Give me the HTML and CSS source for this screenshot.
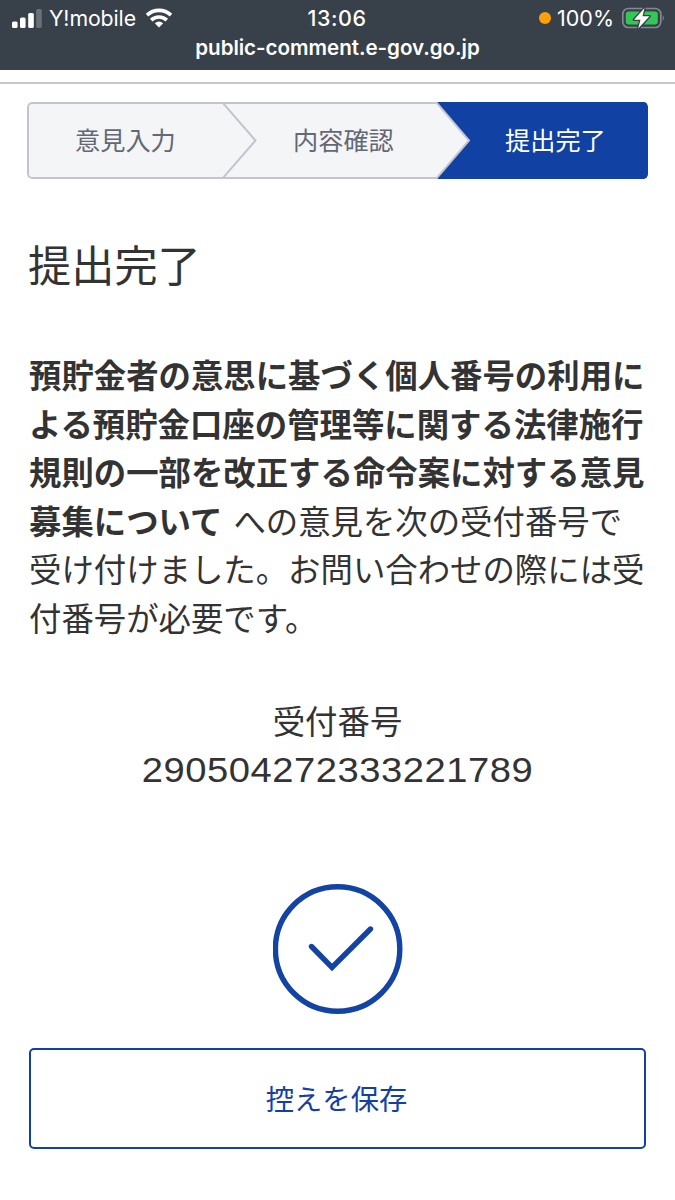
FILE: index.html
```html
<!DOCTYPE html>
<html lang="ja">
<head>
<meta charset="utf-8">
<title>提出完了</title>
<link rel="stylesheet" href="styles.css">
</head>
<body>
<header class="browser-bar">
  <div class="status">
    <div class="status-left">
      <svg class="signal" width="31" height="20" viewBox="0 0 31 20" fill="#fff">
        <rect x="0" y="12.5" width="5.6" height="6.5" rx="1.5"/>
        <rect x="8" y="8.5" width="5.6" height="10.5" rx="1.5"/>
        <rect x="16.2" y="4" width="5.6" height="15" rx="1.5"/>
        <rect x="24.2" y="0" width="5.6" height="19" rx="1.5" opacity=".25"/>
      </svg>
      <span class="carrier">Y!mobile</span>
      <svg class="wifi" width="28" height="20" viewBox="0 0 28 20" fill="none" stroke="#fff" stroke-width="3.6">
        <path d="M2 7.1A17.500 17.500 0 0 1 26 7.100"/>
        <path d="M6.200 12.100A11.200 11.200 0 0 1 21.800 12.100"/>
        <path d="M14 19.500L9.800 15.300Q14 11.600 18.200 15.300Z" fill="#fff" stroke="none"/>
      </svg>
    </div>
    <span class="time">13:06</span>
    <div class="status-right">
      <span class="dot"></span>
      <span class="percent">100%</span>
      <svg class="battery" width="44" height="24" viewBox="0 0 44 24">
        <rect x="1.800" y="1.500" width="38" height="19" rx="5.500" fill="none" stroke="#858a91" stroke-width="1.600"/>
        <rect x="4.800" y="4.500" width="32" height="13" rx="3" fill="#33c758"/>
        <path d="M41.700 8Q44 11 41.700 14Z" fill="#858a91"/>
        <path d="M23.500 1L13 12.700H19.500L17.200 21.500L28.500 9.300H21.500Z" fill="#fff" stroke="#38404a" stroke-width="2.600" paint-order="stroke" stroke-linejoin="round"/>
      </svg>
    </div>
  </div>
  <div class="address">public-comment.e-gov.go.jp</div>
</header>
<div class="page-head"></div>
<main class="content">
  <ol class="steps">
    <li class="step">意見入力
      <svg class="arrow" width="35" height="77" viewBox="0 0 35 77"><path d="M0 0L33.500 38.500L0 77" fill="#f4f5f7" stroke="#c3c4ce" stroke-width="2"/></svg>
    </li>
    <li class="step step-confirm">内容確認</li>
    <li class="step step-current">
      <svg class="arrow arrow-in" width="35" height="77" viewBox="0 0 35 77"><path d="M0 0L33 38.500L0 77" fill="#f4f5f7" stroke="#c3c4ce" stroke-width="2"/></svg>
      提出完了</li>
  </ol>
  <h1 class="title">提出完了</h1>
  <p class="message"><strong>預貯金者の意思に基づく個人番号の利用による預貯金口座の管理等に関する法律施行規則の一部を改正する命令案に対する意見募集について</strong>への意見を次の受付番号で<br>受け付けました。お問い合わせの際には受付番号が必要です。</p>
  <div class="receipt">
    <div>受付番号</div>
    <div class="number">290504272333221789</div>
  </div>
  <svg class="done" width="130" height="130" viewBox="0 0 130 130" fill="none" stroke="#1344a3" stroke-width="5.400">
    <circle cx="64.600" cy="65" r="62.200"/>
    <path d="M38.500 62.500L59 83.500L97.500 45" stroke-linecap="round" stroke-linejoin="miter"/>
  </svg>
  <button class="save" type="button">控えを保存</button>
</main>
</body>
</html>
```
FILE: styles.css
```css
* { box-sizing: border-box; }
body {
  margin: 0;
  background: #fff;
  color: #333;
  font-family: "Noto Sans CJK JP", sans-serif;
  font-weight: 400;
}
.browser-bar {
  height: 70px;
  padding-top: 6px;
  background: #38404a;
  color: #fff;
  font-family: Inter, sans-serif;
}
.status {
  display: grid;
  grid-template-columns: 1fr auto 1fr;
  align-items: center;
  height: 25px;
  padding: 0 10px 0 12px;
  line-height: 25px;
}
.status-left, .status-right { display: flex; align-items: center; }
.status-right { justify-content: flex-end; }
.signal { margin-right: 6px; }
.carrier { width: 88px; font-size: 21.3px; font-weight: 400; letter-spacing: -.1px; white-space: nowrap; }
.wifi { margin-left: 8px; margin-top: -2px; }
.time { margin-left: -3px; font-size: 21.5px; font-weight: 500; letter-spacing: .5px; }
.dot { width: 12px; height: 12px; margin-right: 6px; margin-top: -1px; border-radius: 50%; background: #ff9f0a; }
.percent { margin-right: 7px; font-size: 21.5px; font-weight: 400; white-space: nowrap; }
.address {
  height: 32px;
  line-height: 33px;
  text-align: center;
  font-size: 20.6px;
  font-weight: 600;
  letter-spacing: -.05px;
}
.page-head { height: 14px; border-bottom: 2px solid #c8c8c8; }
.content { padding: 18px 27px 0; }
.steps {
  display: grid;
  grid-template-columns: 195px 214px 212px;
  height: 77px;
  margin: 0;
  padding: 0;
  list-style: none;
  border-radius: 5px;
  overflow: hidden;
}
.step {
  position: relative;
  display: flex;
  align-items: center;
  padding: 0 0 3px 46px;
  background: #f4f5f7;
  border: 2px solid #c3c4ce;
  border-right: 0;
  border-left: 0;
  color: #626875;
  font-size: 25.2px;
  white-space: nowrap;
}
.step:first-child { border-left: 2px solid #c3c4ce; border-radius: 5px 0 0 5px; }
.arrow { position: absolute; top: -2px; right: -35px; z-index: 1; }
.step-confirm { padding-left: 71px; }
.step-current { padding-left: 69px; background: #1142a3; border-color: #1142a3; color: #fff; }
.arrow-in { right: auto; left: 0; }
.title {
  margin: 52px 0 0 1px;
  height: 64px;
  line-height: 64px;
  font-size: 43.2px;
  font-weight: 400;
}
.message {
  margin: 55px 0 0 2px;
  width: 620px;
  font-size: 32.4px;
  line-height: 48.6px;
}
.message strong { margin-right: 11px; font-weight: 700; }
.receipt { margin-top: 54px; text-align: center; font-size: 32.4px; line-height: 48.6px; }
.number {
  height: 49px;
  padding-top: 2px;
  font-family: "Liberation Sans", sans-serif;
  font-size: 35.5px;
  letter-spacing: .5px;
  transform: scaleX(1.075);
}
.done { display: block; margin: 91px 0 0 246px; }
.save {
  display: block;
  width: 617px;
  height: 101px;
  margin: 34px 0 0 2px;
  padding: 0 2px 3px 0;
  background: #fff;
  border: 2px solid #1142a3;
  border-radius: 5px;
  color: #1142a3;
  font-family: inherit;
  font-size: 28.3px;
  font-weight: 400;
}
```
